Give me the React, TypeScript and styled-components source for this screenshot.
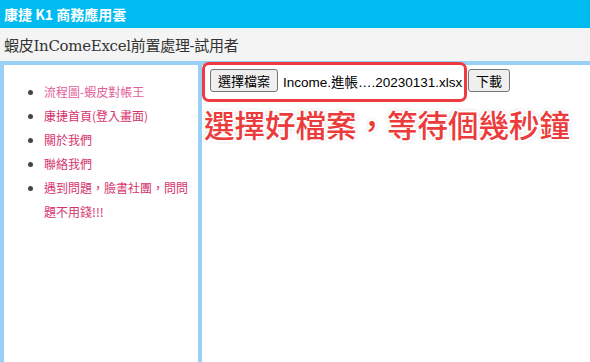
import styled, { createGlobalStyle } from "styled-components";

const GlobalStyle = createGlobalStyle`
  html, body {
    margin: 0;
    padding: 0;
    background: #ffffff;
  }
  body {
    font-family: "Liberation Sans", "Noto Sans CJK TC", sans-serif;
  }
`;

const Page = styled.div`
  display: flex;
  flex-direction: column;
  height: 362px;
  overflow: hidden;
`;

const TopBar = styled.div`
  display: flex;
  align-items: center;
  height: 28px;
  padding-left: 4px;
  background: #00bbf0;
  color: #ffffff;
  font-family: "Noto Sans CJK TC", sans-serif;
  font-weight: 700;
  font-size: 14px;
`;

const TitleBar = styled.div`
  display: flex;
  align-items: center;
  height: 33px;
  padding-left: 4px;
  background: #f4f4f4;
  color: #333333;
  font-family: "DejaVu Serif", "Noto Sans CJK TC", serif;
  font-size: 15px;
  letter-spacing: -0.3px;
`;

const Body = styled.div`
  flex: 1;
  display: flex;
  border-top: 4px solid #99d1f6;
  border-left: 4px solid #99d1f6;
`;

const Sidebar = styled.nav`
  width: 194px;
  flex-shrink: 0;
  border-right: 4px solid #99d1f6;
`;

const Menu = styled.ul`
  margin: 0;
  padding: 15px 6px 0 40px;
  color: #444444;
  font-family: "Noto Sans CJK TC", sans-serif;
  font-size: 12px;
  line-height: 24px;
`;

const MenuLink = styled.a<{ $visited?: boolean }>`
  color: ${(p) => (p.$visited ? "#e2609a" : "#d6336e")};
  text-decoration: none;
  cursor: pointer;
`;

const Content = styled.main`
  position: relative;
  flex: 1;
`;

const UploadRow = styled.div`
  display: flex;
  align-items: center;
  padding: 4px 0 0 8px;
  height: 23px;
`;

const PlainButton = styled.button<{ $width: number }>`
  flex-shrink: 0;
  width: ${(p) => p.$width}px;
  height: 23px;
  padding: 0;
  border: 1px solid #767676;
  border-radius: 3px;
  background: #efefef;
  color: #000000;
  font-family: "Noto Sans CJK TC", sans-serif;
  font-size: 13px;
  line-height: 1;
`;

const FileName = styled.span`
  flex-shrink: 0;
  width: 185px;
  margin-left: 5px;
  font-size: 13.5px;
  color: #000000;
  white-space: nowrap;
`;

const Highlight = styled.div`
  position: absolute;
  left: 0;
  top: -3px;
  width: 259px;
  height: 34px;
  border: 3px solid #ef3a40;
  border-radius: 7px;
  pointer-events: none;
`;

const Hint = styled.div`
  margin: 13px 0 0 2px;
  color: #ec3b3b;
  font-family: "Noto Sans CJK TC", sans-serif;
  font-weight: 500;
  font-size: 30.5px;
  line-height: 38px;
  white-space: nowrap;
  text-shadow:
    2px 0 #fff, -2px 0 #fff, 0 2px #fff, 0 -2px #fff,
    1.5px 1.5px #fff, -1.5px -1.5px #fff, 1.5px -1.5px #fff, -1.5px 1.5px #fff,
    0 0 4px rgba(0, 0, 0, 0.45);
`;

const links = [
  { label: "流程圖-蝦皮對帳王", visited: true },
  { label: "康捷首頁(登入畫面)" },
  { label: "關於我們" },
  { label: "聯絡我們" },
  { label: "遇到問題，臉書社團，問問題不用錢!!!" },
];

export default function App() {
  return (
    <Page>
      <GlobalStyle />
      <TopBar>康捷 K1 商務應用雲</TopBar>
      <TitleBar>蝦皮InComeExcel前置處理-試用者</TitleBar>
      <Body>
        <Sidebar>
          <Menu>
            {links.map((l) => (
              <li key={l.label}>
                <MenuLink $visited={l.visited}>{l.label}</MenuLink>
              </li>
            ))}
          </Menu>
        </Sidebar>
        <Content>
          <UploadRow>
            <PlainButton $width={68}>選擇檔案</PlainButton>
            <FileName>Income.進帳….20230131.xlsx</FileName>
            <PlainButton $width={42}>下載</PlainButton>
          </UploadRow>
          <Highlight />
          <Hint>選擇好檔案，等待個幾秒鐘</Hint>
        </Content>
      </Body>
    </Page>
  );
}
